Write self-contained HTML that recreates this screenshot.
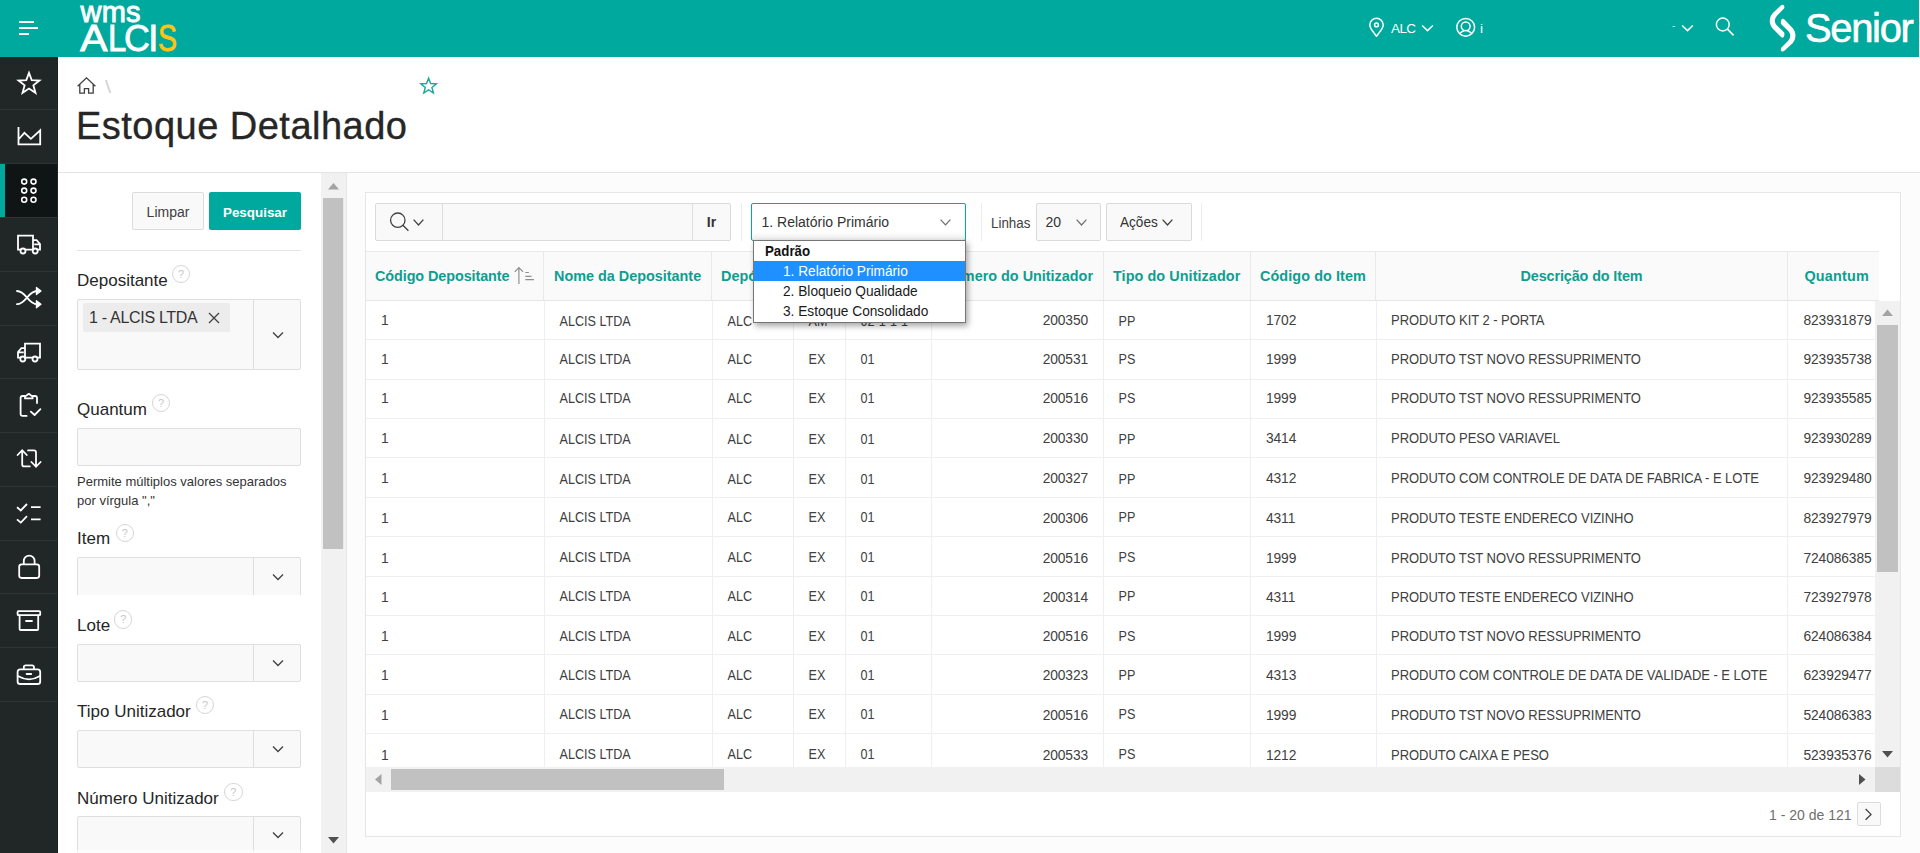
<!DOCTYPE html>
<html lang="pt-BR">
<head>
<meta charset="utf-8">
<title>Estoque Detalhado</title>
<style>
*{box-sizing:border-box;margin:0;padding:0}
html,body{width:1920px;height:853px;overflow:hidden;background:#fff}
body{font-family:"Liberation Sans",sans-serif;color:#262626;position:relative;font-size:14px}
.abs{position:absolute}
/* top bar */
#top{position:absolute;left:0;top:0;width:1919px;height:57px;background:#00a99d}
#top svg{position:absolute;overflow:visible}
#top .t{position:absolute;color:#fff;white-space:nowrap}
/* side bar */
#side{position:absolute;left:0;top:57px;width:58px;height:796px;background:#202726;border-right:1px solid #1c2322}
#side .sp{position:absolute;left:0;width:57px;height:1px;background:#2e3534}
/* page head */
#phead{position:absolute;left:58px;top:57px;width:1862px;height:116px;background:#fff;border-bottom:1px solid #e4e4e4}
#title{position:absolute;left:76px;top:103.5px;font-size:38px;line-height:44px;color:#262626;white-space:nowrap;letter-spacing:.48px;-webkit-text-stroke:.35px #262626}
/* filter panel */
#filt{position:absolute;left:58px;top:173px;width:263px;height:680px;background:#fff}
#vsb{position:absolute;left:321px;top:173px;width:25px;height:680px;background:#f1f1f1}
#vsbb{position:absolute;left:346px;top:173px;width:1px;height:680px;background:#e6e6e6}
#vsb .th{position:absolute;left:2px;top:25px;width:21px;height:351px;background:#c1c1c1}
.lbl{position:absolute;left:77px;font-size:17px;line-height:20px;color:#262626;white-space:nowrap}
.hlp{position:absolute;width:18.4px;height:18.4px;border:1px solid #d6d6d6;border-radius:50%;color:#c8c8c8;font-size:11px;line-height:16.4px;text-align:center}
.inp{position:absolute;left:77px;width:224px;height:38px;background:#f9f9f9;border:1px solid #dfdfdf;border-radius:2px}

.inp .dd{position:absolute;right:0;top:0;bottom:0;width:47px;border-left:1px solid #dfdfdf}
.inp .dd svg{position:absolute;left:18px;top:50%;margin-top:-4px;width:12px;height:8px;fill:none;stroke:#404040;stroke-width:1.3}
.chip{position:absolute;left:5px;top:3px;height:29px;width:147px;background:#ececec;border-radius:2px;font-size:16px;line-height:30.5px;padding-left:6px;letter-spacing:-.3px;color:#333;white-space:nowrap}
.chip svg{position:absolute;left:125px;top:9px;width:12px;height:12px;stroke:#404040;stroke-width:1.3;fill:none}
/* main */
#main{position:absolute;left:347px;top:173px;width:1573px;height:680px;background:#fcfcfc}
#card{position:absolute;left:365px;top:192px;width:1536px;height:645px;background:#fff;border:1px solid #e6e6e6}
.tb{position:absolute;top:203px;height:38px;background:#f9f9f9;border:1px solid #dadada;border-radius:2px}
.vsep{position:absolute;top:203px;width:1px;height:38px;background:#ececec}

#tbl{position:absolute;left:366px;top:251px;width:1534px;height:516px;overflow:hidden}
.hd{position:absolute;left:0;top:0;width:1513px;height:50px;background:#fafafa;border-top:1px solid #e9e9e9;border-bottom:1px solid #e6e6e6}
.th{position:absolute;top:1px;height:48px;line-height:48px;font-weight:bold;font-size:14.4px;color:#0d9e92;white-space:nowrap;border-right:1px solid #e9e9e9;padding:0 10px}
.row{position:absolute;left:0;width:1509px;height:40px;border-bottom:1px solid #efefef}
.c{position:absolute;top:0;height:100%;line-height:inherit;font-size:13px;color:#404040;white-space:nowrap;padding:0 15px;border-right:1px solid #efefef}
.c.s{font-size:12.6px;padding-left:14.5px}
.c.d{padding-left:14px;letter-spacing:-.04px}
.c.s span{display:inline-block;transform:scaleY(1.13)}
.c.d span{display:inline-block;transform:scaleY(1.055)}
.opt span{display:inline-block;transform:scaleY(1.09);transform-origin:50% 70%}
.c.n{font-size:13.8px;letter-spacing:-.12px}
.c.r,.th.r{text-align:right}
.th.ce{text-align:center}
.opt{position:absolute;left:0;width:100%;height:20px;line-height:21px;font-size:13.7px;color:#1a1a1a;white-space:nowrap;padding-left:29px}
</style>
</head>
<body>
<div id="top">
<svg style="left:0;top:0" width="60" height="57"><g fill="#fff"><rect x="19" y="21" width="15" height="2"/><rect x="19" y="27" width="19" height="2"/><rect x="19" y="33" width="10" height="2"/></g></svg>
<div class="t" id="wms" style="left:80.5px;top:-5px;font-size:29px;line-height:34px;letter-spacing:.2px;-webkit-text-stroke:.9px #fff">wms</div>
<div class="t" id="alcis" style="left:0;top:18px;width:200px;height:42px;font-size:36.5px;line-height:42px;-webkit-text-stroke:.8px currentColor"><span style="position:absolute;top:0;display:block;transform-origin:0 0;left:80.4px;transform:scaleX(1.13)">A</span><span style="position:absolute;top:0;display:block;transform-origin:0 0;left:108px;transform:scaleX(.9)">L</span><span style="position:absolute;top:0;display:block;transform-origin:0 0;left:123.8px;transform:scaleX(.98)">C</span><span style="position:absolute;top:0;display:block;transform-origin:0 0;left:148.2px">I</span><span style="position:absolute;top:0;display:block;transform-origin:0 0;left:158px;transform:scaleX(.78);color:#fdc510">S</span></div>
<svg style="left:1366px;top:15px" width="24" height="26" viewBox="0 0 24 26" fill="none" stroke="#fff" stroke-width="1.5"><path d="M10.5 21.2 C7.5 17 3.8 13.4 3.8 9.9 a6.7 6.7 0 0 1 13.4 0 C17.2 13.4 13.5 17 10.5 21.2Z" stroke-linejoin="round"/><circle cx="10.5" cy="9.9" r="1.9"/></svg>
<div class="t" style="left:1391px;top:20px;font-size:13.5px;line-height:18px;letter-spacing:-.6px">ALC</div>
<svg style="left:1421px;top:24px" width="13" height="9" viewBox="0 0 13 9" fill="none" stroke="#fff" stroke-width="1.5"><path d="M1.2 1.5 L6.5 6.6 L11.8 1.5"/></svg>
<svg style="left:1455px;top:17px" width="22" height="22" viewBox="0 0 22 22" fill="none" stroke="#fff" stroke-width="1.5"><circle cx="10.7" cy="10.3" r="8.9"/><circle cx="10.7" cy="9.3" r="4.4"/><path d="M4.6 16.6 C6.2 14.9 7.6 14.2 9 13.7 M16.8 16.6 C15.2 14.9 13.8 14.2 12.4 13.7"/></svg>
<div class="t" style="left:1480px;top:20px;font-size:13.5px;line-height:18px">i</div>
<div class="t" style="left:1672px;top:17px;font-size:10px;line-height:18px;opacity:.8">-</div>
<svg style="left:1681px;top:24px" width="13" height="9" viewBox="0 0 13 9" fill="none" stroke="#fff" stroke-width="1.5"><path d="M1.2 1.5 L6.5 6.6 L11.8 1.5"/></svg>
<svg style="left:1714px;top:16px" width="22" height="22" viewBox="0 0 22 22" fill="none" stroke="#fff" stroke-width="1.5"><circle cx="8.8" cy="8.5" r="6.4"/><path d="M13.4 13.1 L19.6 19.4"/></svg>
<svg style="left:1762px;top:0" width="44" height="57" viewBox="1762 0 44 57" fill="#fff"><path d="M1783.2 4.9 C1784.5 5.2 1784.5 6.6 1784.2 8.3 L1777 15.7 C1774.2 18.8 1774.2 22.6 1777 25.5 L1784.2 32.4 C1784.6 34.2 1784.5 36.6 1783 37.6 C1782 38 1781.4 37.5 1780.5 36.6 L1772.6 28.4 C1768.8 24.4 1768.8 17.2 1772.6 13.2 L1780.8 5.6 C1781.6 4.9 1782.4 4.7 1783.2 4.9Z"/><path d="M1783.2 4.9 C1784.5 5.2 1784.5 6.6 1784.2 8.3 L1777 15.7 C1774.2 18.8 1774.2 22.6 1777 25.5 L1784.2 32.4 C1784.6 34.2 1784.5 36.6 1783 37.6 C1782 38 1781.4 37.5 1780.5 36.6 L1772.6 28.4 C1768.8 24.4 1768.8 17.2 1772.6 13.2 L1780.8 5.6 C1781.6 4.9 1782.4 4.7 1783.2 4.9Z" transform="rotate(180 1782.6 28.2)"/></svg>
<div class="t" id="senior" style="left:1805px;top:5px;font-size:40px;line-height:46px;letter-spacing:-1.35px;-webkit-text-stroke:.6px #fff">Senior</div>
</div>
<div id="side">
<div class="act" style="position:absolute;left:0;top:107.2px;width:57px;height:52.8px;background:#0f1514"></div>
<div style="position:absolute;left:0;top:107.2px;width:5px;height:52.8px;background:#00a99d"></div>
<div class="sp" style="top:52px"></div><div class="sp" style="top:106px"></div><div class="sp" style="top:160px"></div><div class="sp" style="top:214px"></div><div class="sp" style="top:268px"></div><div class="sp" style="top:321px"></div><div class="sp" style="top:375px"></div><div class="sp" style="top:429px"></div><div class="sp" style="top:483px"></div><div class="sp" style="top:536px"></div><div class="sp" style="top:590px"></div><div class="sp" style="top:644px"></div>
<svg style="position:absolute;left:0;top:-57px" width="58" height="853" viewBox="0 0 58 853" fill="none" stroke="#fff" stroke-width="1.8" stroke-linejoin="round" stroke-linecap="round">
<path d="M29.00 72.90 L31.70 80.18 L39.46 80.50 L33.37 85.32 L35.47 92.80 L29.00 88.50 L22.53 92.80 L24.63 85.32 L18.54 80.50 L26.30 80.18Z" stroke-linejoin="miter"/>
<path d="M18.5 127 V144.3 H40.2 V130.4 L30.9 138.8 L24.4 132.8 L18.5 139.5" stroke-linecap="butt" stroke-linejoin="miter"/>
<circle cx="24.2" cy="181.6" r="2.5" stroke-width="1.55"/><circle cx="24.2" cy="190.6" r="2.5" stroke-width="1.55"/><circle cx="24.2" cy="199.7" r="2.5" stroke-width="1.55"/><circle cx="33.5" cy="181.6" r="2.5" stroke-width="1.55"/><circle cx="33.5" cy="190.6" r="2.5" stroke-width="1.55"/><circle cx="33.5" cy="199.7" r="2.5" stroke-width="1.55"/>
<path d="M20.2 249.6 H18 V235.6 H33 V249.6 H25.8 M33 240.2 H36.6 L40 244 V249.6 H38 M32.4 249.6 H33 M34.2 244.4 H39.6" stroke-linejoin="miter" stroke-linecap="butt"/><circle cx="23" cy="251" r="2.5"/><circle cx="35.2" cy="251" r="2.5"/>
<path d="M17 291 C26 291 28 304.2 37 304.2 M17 304.2 C26 304.2 28 291 37 291" /><path d="M36.4 287.4 L41 291 L36.4 294.6Z M36.4 300.6 L41 304.2 L36.4 307.8Z" fill="#fff" stroke-width="1.2"/>
<path d="M37.8 357.6 H40 V343.6 H25 V357.6 H32.2 M25 348.2 H21.4 L18 352 V357.6 H20 M25.6 357.6 H25 M23.8 352.4 H18.4" stroke-linejoin="miter" stroke-linecap="butt"/><circle cx="35" cy="359" r="2.5"/><circle cx="22.8" cy="359" r="2.5"/>
<path d="M25 396 H22.6 Q20.6 396 20.6 398 V413.8 Q20.6 415.9 22.6 415.9 H26.6 M32.6 396 H35 Q37 396 37 398 V403 M25 398.4 V396.6 L28.8 393.8 L32.6 396.6 V398.4Z M30.8 411.6 L34.6 415 L40.4 409.2"/>
<path d="M17.6 455 L22.2 450.2 L26.8 455 M22.2 450.6 V464.4 Q22.2 466.4 24.2 466.4 H29.8 M40.6 462 L36 466.8 L31.4 462 M36 466.4 V452.4 Q36 450.4 34 450.4 H28" stroke-linejoin="miter"/>
<path d="M17 507.2 L20.8 510.4 L27 504 M31 507.2 H40.6 M17 519.4 L20.8 522.6 L27 516.2 M31 519.4 H40.6" stroke-linejoin="miter" stroke-linecap="butt"/>
<rect x="19.2" y="564.4" width="20" height="13.6" rx="2.4"/><path d="M23.8 564 V561 a5.4 5.4 0 0 1 10.8 0 V564"/>
<rect x="17.6" y="611.2" width="22.6" height="4" rx=".8"/><path d="M19.6 615.4 V629 Q19.6 630 20.6 630 H37.2 Q38.2 630 38.2 629 V615.4 M26 621 H32"/>
<rect x="17.6" y="669.4" width="22.6" height="14.6" rx="2.6"/><path d="M23.8 669 V667.4 Q23.8 665.4 25.8 665.4 H32 Q34 665.4 34 667.4 V669 M17.8 676 Q29 682.6 40 676 M26.6 674 H31.2" />
</svg>
</div>
<div id="phead"></div>
<svg class="abs" style="left:70px;top:70px" width="380" height="32" viewBox="70 70 380 32" fill="none"><path d="M77.6 86.3 L86.5 77.8 L95.4 86.3 M79.8 84.6 V93.2 H84.4 V88.6 H88.6 V93.2 H93.2 V84.6" stroke="#404040" stroke-width="1.3"/><path d="M428.60 78.20 L430.66 83.57 L436.40 83.87 L431.93 87.48 L433.42 93.03 L428.60 89.90 L423.78 93.03 L425.27 87.48 L420.80 83.87 L426.54 83.57Z" stroke="#1aa79c" stroke-width="1.4" stroke-linejoin="miter"/></svg>
<div class="abs" style="left:105px;top:77px;font-size:19px;line-height:20px;color:#d2d2d2;transform:scaleX(1.15);transform-origin:left">\</div>
<div id="title">Estoque Detalhado</div>
<div id="filt"></div>
<div class="abs btn" style="left:132px;top:192px;width:72px;height:38px;background:#f9f9f9;border:1px solid #dcdcdc;color:#404040;font-size:14px;line-height:39.5px;text-align:center;border-radius:2px">Limpar</div>
<div class="abs btn" style="left:209px;top:192px;width:92px;height:38px;background:#00a99d;color:#fff;font-weight:bold;font-size:13.4px;line-height:41.5px;text-align:center;border-radius:2px">Pesquisar</div>
<div class="abs" style="left:77px;top:250px;width:224px;height:1px;background:#e4e4e4"></div>
<div class="lbl" style="top:271.4px">Depositante</div><div class="hlp" style="left:171.8px;top:264.8px">?</div>
<div class="inp" style="top:299px;height:71px"><div class="chip">1 - ALCIS LTDA<svg viewBox="0 0 12 12"><path d="M1 1 L11 11 M11 1 L1 11"/></svg></div><div class="dd"><svg viewBox="0 0 12 8"><path d="M1 1.5 L6 6.5 L11 1.5"/></svg></div></div>
<div class="lbl" style="top:400.0px">Quantum</div><div class="hlp" style="left:151.8px;top:393.6px">?</div>
<div class="inp" style="top:428px;height:38px"></div>
<div class="abs" style="left:77px;top:472px;width:230px;font-size:13px;line-height:19.4px;color:#333">Permite múltiplos valores separados<br>por vírgula ","</div>
<div class="lbl" style="top:528.9px">Item</div><div class="hlp" style="left:115.5px;top:524.0px">?</div>
<div class="inp" style="top:557px;height:38px;border-bottom:none;border-radius:2px 2px 0 0"><div class="dd"><svg viewBox="0 0 12 8"><path d="M1 1.5 L6 6.5 L11 1.5"/></svg></div></div>
<div class="lbl" style="top:616.2px">Lote</div><div class="hlp" style="left:114.0px;top:610.2px">?</div>
<div class="inp" style="top:644px;height:38px"><div class="dd"><svg viewBox="0 0 12 8"><path d="M1 1.5 L6 6.5 L11 1.5"/></svg></div></div>
<div class="lbl" style="top:702.1px">Tipo Unitizador</div><div class="hlp" style="left:195.8px;top:695.7px">?</div>
<div class="inp" style="top:730px;height:38px"><div class="dd"><svg viewBox="0 0 12 8"><path d="M1 1.5 L6 6.5 L11 1.5"/></svg></div></div>
<div class="lbl" style="top:789.1px">Número Unitizador</div><div class="hlp" style="left:224.2px;top:783.1px">?</div>
<div class="inp" style="top:816px;height:38px"><div class="dd"><svg viewBox="0 0 12 8"><path d="M1 1.5 L6 6.5 L11 1.5"/></svg></div></div>

<div id="vsb"><div class="th"></div><svg class="abs" style="left:0;top:0" width="25" height="680"><path d="M7 16.5 L12.5 10 L18 16.5Z" fill="#a3a3a3"/><path d="M7 664 L12.5 670.5 L18 664Z" fill="#505050"/></svg></div><div id="vsbb"></div>
<div id="main"></div>
<div id="card"></div>
<div class="tb" style="left:375px;width:356px"><div class="abs" style="left:66px;top:0;width:1px;height:36px;background:#dfdfdf"></div><div class="abs" style="left:316px;top:0;width:1px;height:36px;background:#dfdfdf"></div><div class="abs" style="left:317px;top:0;width:37px;height:36px;line-height:36px;text-align:center;font-weight:bold;font-size:14px;color:#333">Ir</div></div>
<svg class="abs" style="left:388px;top:210px" width="24" height="24" viewBox="0 0 24 24" fill="none" stroke="#404040" stroke-width="1.3"><circle cx="9.8" cy="10.2" r="7.2"/><path d="M14.9 15.3 L20.4 20.8"/></svg>
<svg class="abs" style="left:413px;top:218.6px" width="11" height="7" viewBox="0 0 11 7" fill="none" stroke="#404040" stroke-width="1.3"><path d="M.6 .6 L5.5 6 L10.4 .6"/></svg>
<div class="vsep" style="left:741px"></div>
<div class="abs" style="left:751px;top:203px;width:215px;height:38px;background:linear-gradient(#fff 78%,#ebebeb);border:1.5px solid #00a99d;border-radius:2px;font-size:14px;line-height:37px;padding-left:9.5px;color:#333;white-space:nowrap">1. Relatório Primário</div>
<svg class="abs" style="left:940px;top:218.8px" width="11" height="7" viewBox="0 0 11 7" fill="none" stroke="#6a6a6a" stroke-width="1.15"><path d="M.6 .6 L5.5 6 L10.4 .6"/></svg>
<div class="vsep" style="left:981px"></div>
<div class="abs" style="left:991px;top:213.6px;font-size:13.4px;line-height:20px;color:#404040;transform:scaleY(1.13);transform-origin:50% 78%">Linhas</div>
<div class="tb" style="left:1036px;width:65px;font-size:14px;line-height:36px;padding-left:8.5px;color:#333">20</div>
<svg class="abs" style="left:1075.5px;top:218.8px" width="11" height="7" viewBox="0 0 11 7" fill="none" stroke="#6f6f6f" stroke-width="1.2"><path d="M.6 .6 L5.5 6 L10.4 .6"/></svg>
<div class="tb" style="left:1106px;width:86px;font-size:13.6px;line-height:37px;padding-left:13px;color:#333"><span style="display:inline-block;transform:scaleY(1.08);transform-origin:50% 70%">Ações</span></div>
<svg class="abs" style="left:1162px;top:218.8px" width="11" height="7" viewBox="0 0 11 7" fill="none" stroke="#404040" stroke-width="1.3"><path d="M.6 .6 L5.5 6 L10.4 .6"/></svg>
<div class="vsep" style="left:1201px"></div>
<div id="tbl">
<div class="hd"></div>
<div class="th " style="left:0px;width:178px;padding-left:9px;letter-spacing:-.08px">Código Depositante</div><div class="th " style="left:178px;width:168px">Nome da Depositante</div><div class="th " style="left:346px;width:82px;padding-left:9px">Depósito</div><div class="th " style="left:428px;width:52px">Tipo</div><div class="th " style="left:480px;width:86px">Endereço</div><div class="th r" style="left:566px;width:172px">Número do Unitizador</div><div class="th " style="left:738px;width:147px;padding-left:9px;letter-spacing:.07px">Tipo do Unitizador</div><div class="th " style="left:885px;width:125px;padding-left:9px;letter-spacing:.09px">Código do Item</div><div class="th ce" style="left:1010px;width:412px;letter-spacing:-.12px">Descrição do Item</div><div class="th r" style="left:1422px;width:91px;border-right:none;letter-spacing:.2px">Quantum</div>
<svg class="abs" style="left:147px;top:14px" width="24" height="22" viewBox="0 0 24 22" fill="none" stroke="#8f8f8f" stroke-width="1.2"><path d="M5.9 18.9 V3 M1.75 6.9 L5.9 2.7 L10.05 6.9 M12.3 7.5 H15.9 M12.3 11.3 H18.5 M12.3 14.7 H20.9"/></svg>
<div class="row" style="top:50px;height:39px;line-height:40.3px"><div class="c n" style="left:0px;width:179px">1</div><div class="c s" style="left:179px;width:168px"><span>ALCIS LTDA</span></div><div class="c s" style="left:347px;width:81px"><span>ALC</span></div><div class="c s" style="left:428px;width:52px"><span>AM</span></div><div class="c s" style="left:480px;width:86px"><span>02-1-1-1</span></div><div class="c r n" style="left:566px;width:172px">200350</div><div class="c s" style="left:738px;width:147px"><span>PP</span></div><div class="c n" style="left:885px;width:126px">1702</div><div class="c d" style="left:1011px;width:411px"><span>PRODUTO KIT 2 - PORTA</span></div><div class="c r n" style="left:1422px;width:87px;border-right:none;padding-right:3.5px">823931879</div></div>
<div class="row" style="top:89px;height:40px;line-height:40.7px"><div class="c n" style="left:0px;width:179px">1</div><div class="c s" style="left:179px;width:168px"><span>ALCIS LTDA</span></div><div class="c s" style="left:347px;width:81px"><span>ALC</span></div><div class="c s" style="left:428px;width:52px"><span>EX</span></div><div class="c s" style="left:480px;width:86px"><span>01</span></div><div class="c r n" style="left:566px;width:172px">200531</div><div class="c s" style="left:738px;width:147px"><span>PS</span></div><div class="c n" style="left:885px;width:126px">1999</div><div class="c d" style="left:1011px;width:411px"><span>PRODUTO TST NOVO RESSUPRIMENTO</span></div><div class="c r n" style="left:1422px;width:87px;border-right:none;padding-right:3.5px">923935738</div></div>
<div class="row" style="top:129px;height:39px;line-height:38.9px"><div class="c n" style="left:0px;width:179px">1</div><div class="c s" style="left:179px;width:168px"><span>ALCIS LTDA</span></div><div class="c s" style="left:347px;width:81px"><span>ALC</span></div><div class="c s" style="left:428px;width:52px"><span>EX</span></div><div class="c s" style="left:480px;width:86px"><span>01</span></div><div class="c r n" style="left:566px;width:172px">200516</div><div class="c s" style="left:738px;width:147px"><span>PS</span></div><div class="c n" style="left:885px;width:126px">1999</div><div class="c d" style="left:1011px;width:411px"><span>PRODUTO TST NOVO RESSUPRIMENTO</span></div><div class="c r n" style="left:1422px;width:87px;border-right:none;padding-right:3.5px">923935585</div></div>
<div class="row" style="top:168px;height:39px;line-height:40.3px"><div class="c n" style="left:0px;width:179px">1</div><div class="c s" style="left:179px;width:168px"><span>ALCIS LTDA</span></div><div class="c s" style="left:347px;width:81px"><span>ALC</span></div><div class="c s" style="left:428px;width:52px"><span>EX</span></div><div class="c s" style="left:480px;width:86px"><span>01</span></div><div class="c r n" style="left:566px;width:172px">200330</div><div class="c s" style="left:738px;width:147px"><span>PP</span></div><div class="c n" style="left:885px;width:126px">3414</div><div class="c d" style="left:1011px;width:411px"><span>PRODUTO PESO VARIAVEL</span></div><div class="c r n" style="left:1422px;width:87px;border-right:none;padding-right:3.5px">923930289</div></div>
<div class="row" style="top:207px;height:40px;line-height:42.3px"><div class="c n" style="left:0px;width:179px">1</div><div class="c s" style="left:179px;width:168px"><span>ALCIS LTDA</span></div><div class="c s" style="left:347px;width:81px"><span>ALC</span></div><div class="c s" style="left:428px;width:52px"><span>EX</span></div><div class="c s" style="left:480px;width:86px"><span>01</span></div><div class="c r n" style="left:566px;width:172px">200327</div><div class="c s" style="left:738px;width:147px"><span>PP</span></div><div class="c n" style="left:885px;width:126px">4312</div><div class="c d" style="left:1011px;width:411px"><span>PRODUTO COM CONTROLE DE DATA DE FABRICA - E LOTE</span></div><div class="c r n" style="left:1422px;width:87px;border-right:none;padding-right:3.5px">923929480</div></div>
<div class="row" style="top:247px;height:39px;line-height:41.1px"><div class="c n" style="left:0px;width:179px">1</div><div class="c s" style="left:179px;width:168px"><span>ALCIS LTDA</span></div><div class="c s" style="left:347px;width:81px"><span>ALC</span></div><div class="c s" style="left:428px;width:52px"><span>EX</span></div><div class="c s" style="left:480px;width:86px"><span>01</span></div><div class="c r n" style="left:566px;width:172px">200306</div><div class="c s" style="left:738px;width:147px"><span>PP</span></div><div class="c n" style="left:885px;width:126px">4311</div><div class="c d" style="left:1011px;width:411px"><span>PRODUTO TESTE ENDERECO VIZINHO</span></div><div class="c r n" style="left:1422px;width:87px;border-right:none;padding-right:3.5px">823927979</div></div>
<div class="row" style="top:286px;height:40px;line-height:43.1px"><div class="c n" style="left:0px;width:179px">1</div><div class="c s" style="left:179px;width:168px"><span>ALCIS LTDA</span></div><div class="c s" style="left:347px;width:81px"><span>ALC</span></div><div class="c s" style="left:428px;width:52px"><span>EX</span></div><div class="c s" style="left:480px;width:86px"><span>01</span></div><div class="c r n" style="left:566px;width:172px">200516</div><div class="c s" style="left:738px;width:147px"><span>PS</span></div><div class="c n" style="left:885px;width:126px">1999</div><div class="c d" style="left:1011px;width:411px"><span>PRODUTO TST NOVO RESSUPRIMENTO</span></div><div class="c r n" style="left:1422px;width:87px;border-right:none;padding-right:3.5px">724086385</div></div>
<div class="row" style="top:326px;height:39px;line-height:41.7px"><div class="c n" style="left:0px;width:179px">1</div><div class="c s" style="left:179px;width:168px"><span>ALCIS LTDA</span></div><div class="c s" style="left:347px;width:81px"><span>ALC</span></div><div class="c s" style="left:428px;width:52px"><span>EX</span></div><div class="c s" style="left:480px;width:86px"><span>01</span></div><div class="c r n" style="left:566px;width:172px">200314</div><div class="c s" style="left:738px;width:147px"><span>PP</span></div><div class="c n" style="left:885px;width:126px">4311</div><div class="c d" style="left:1011px;width:411px"><span>PRODUTO TESTE ENDERECO VIZINHO</span></div><div class="c r n" style="left:1422px;width:87px;border-right:none;padding-right:3.5px">723927978</div></div>
<div class="row" style="top:365px;height:39px;line-height:42.7px"><div class="c n" style="left:0px;width:179px">1</div><div class="c s" style="left:179px;width:168px"><span>ALCIS LTDA</span></div><div class="c s" style="left:347px;width:81px"><span>ALC</span></div><div class="c s" style="left:428px;width:52px"><span>EX</span></div><div class="c s" style="left:480px;width:86px"><span>01</span></div><div class="c r n" style="left:566px;width:172px">200516</div><div class="c s" style="left:738px;width:147px"><span>PS</span></div><div class="c n" style="left:885px;width:126px">1999</div><div class="c d" style="left:1011px;width:411px"><span>PRODUTO TST NOVO RESSUPRIMENTO</span></div><div class="c r n" style="left:1422px;width:87px;border-right:none;padding-right:3.5px">624086384</div></div>
<div class="row" style="top:404px;height:40px;line-height:42.9px"><div class="c n" style="left:0px;width:179px">1</div><div class="c s" style="left:179px;width:168px"><span>ALCIS LTDA</span></div><div class="c s" style="left:347px;width:81px"><span>ALC</span></div><div class="c s" style="left:428px;width:52px"><span>EX</span></div><div class="c s" style="left:480px;width:86px"><span>01</span></div><div class="c r n" style="left:566px;width:172px">200323</div><div class="c s" style="left:738px;width:147px"><span>PP</span></div><div class="c n" style="left:885px;width:126px">4313</div><div class="c d" style="left:1011px;width:411px"><span>PRODUTO COM CONTROLE DE DATA DE VALIDADE - E LOTE</span></div><div class="c r n" style="left:1422px;width:87px;border-right:none;padding-right:3.5px">623929477</div></div>
<div class="row" style="top:444px;height:39px;line-height:41.9px"><div class="c n" style="left:0px;width:179px">1</div><div class="c s" style="left:179px;width:168px"><span>ALCIS LTDA</span></div><div class="c s" style="left:347px;width:81px"><span>ALC</span></div><div class="c s" style="left:428px;width:52px"><span>EX</span></div><div class="c s" style="left:480px;width:86px"><span>01</span></div><div class="c r n" style="left:566px;width:172px">200516</div><div class="c s" style="left:738px;width:147px"><span>PS</span></div><div class="c n" style="left:885px;width:126px">1999</div><div class="c d" style="left:1011px;width:411px"><span>PRODUTO TST NOVO RESSUPRIMENTO</span></div><div class="c r n" style="left:1422px;width:87px;border-right:none;padding-right:3.5px">524086383</div></div>
<div class="row" style="top:483px;height:40px;line-height:43.1px"><div class="c n" style="left:0px;width:179px">1</div><div class="c s" style="left:179px;width:168px"><span>ALCIS LTDA</span></div><div class="c s" style="left:347px;width:81px"><span>ALC</span></div><div class="c s" style="left:428px;width:52px"><span>EX</span></div><div class="c s" style="left:480px;width:86px"><span>01</span></div><div class="c r n" style="left:566px;width:172px">200533</div><div class="c s" style="left:738px;width:147px"><span>PS</span></div><div class="c n" style="left:885px;width:126px">1212</div><div class="c d" style="left:1011px;width:411px"><span>PRODUTO CAIXA E PESO</span></div><div class="c r n" style="left:1422px;width:87px;border-right:none;padding-right:3.5px">523935376</div></div>
</div>
<div class="abs" style="left:1875px;top:301px;width:25px;height:466px;background:#f1f1f1"><div class="abs" style="left:2px;top:24px;width:21px;height:247px;background:#c1c1c1"></div><svg class="abs" style="left:0;top:0" width="25" height="466"><path d="M7 15 L12.5 8.5 L18 15Z" fill="#a3a3a3"/><path d="M7 450 L12.5 456.5 L18 450Z" fill="#505050"/></svg></div>
<div class="abs" style="left:366px;top:767px;width:1509px;height:25px;background:#f1f1f1"><div class="abs" style="left:25px;top:2px;width:333px;height:21px;background:#c1c1c1"></div><svg class="abs" style="left:0;top:0" width="1509" height="25"><path d="M15.5 7 L9 12.5 L15.5 18Z" fill="#a3a3a3"/><path d="M1493 7 L1499.5 12.5 L1493 18Z" fill="#505050"/></svg></div>
<div class="abs" style="left:1875px;top:767px;width:25px;height:25px;background:#dcdcdc"></div>
<div class="abs" style="left:1700px;top:805px;width:151.5px;text-align:right;font-size:14px;line-height:20px;color:#6f6f6f;white-space:nowrap">1 - 20 de 121</div>
<div class="abs" style="left:1857px;top:802px;width:24px;height:24px;background:#f9f9f9;border:1px solid #dcdcdc;border-radius:2px"></div>
<svg class="abs" style="left:1864px;top:808px" width="9" height="13" viewBox="0 0 9 13" fill="none" stroke="#404040" stroke-width="1.3"><path d="M1.6 1 L7 6.4 L1.6 11.8"/></svg>
<div class="abs" id="ddl" style="left:753px;top:240px;width:213px;height:83px;background:#fff;border:1px solid #767676;box-shadow:2px 3px 6px rgba(0,0,0,.35)"><div class="opt" style="top:0;padding-left:11px;font-weight:bold;font-size:13.3px;color:#111"><span>Padrão</span></div><div class="opt" style="top:20px;background:#1e90ff;color:#fff"><span>1. Relatório Primário</span></div><div class="opt" style="top:40px"><span>2. Bloqueio Qualidade</span></div><div class="opt" style="top:60px"><span>3. Estoque Consolidado</span></div></div>
<div class="abs" style="left:58px;top:850px;width:263px;height:3px;background:rgba(255,255,255,.55)"></div>
</body>
</html>
